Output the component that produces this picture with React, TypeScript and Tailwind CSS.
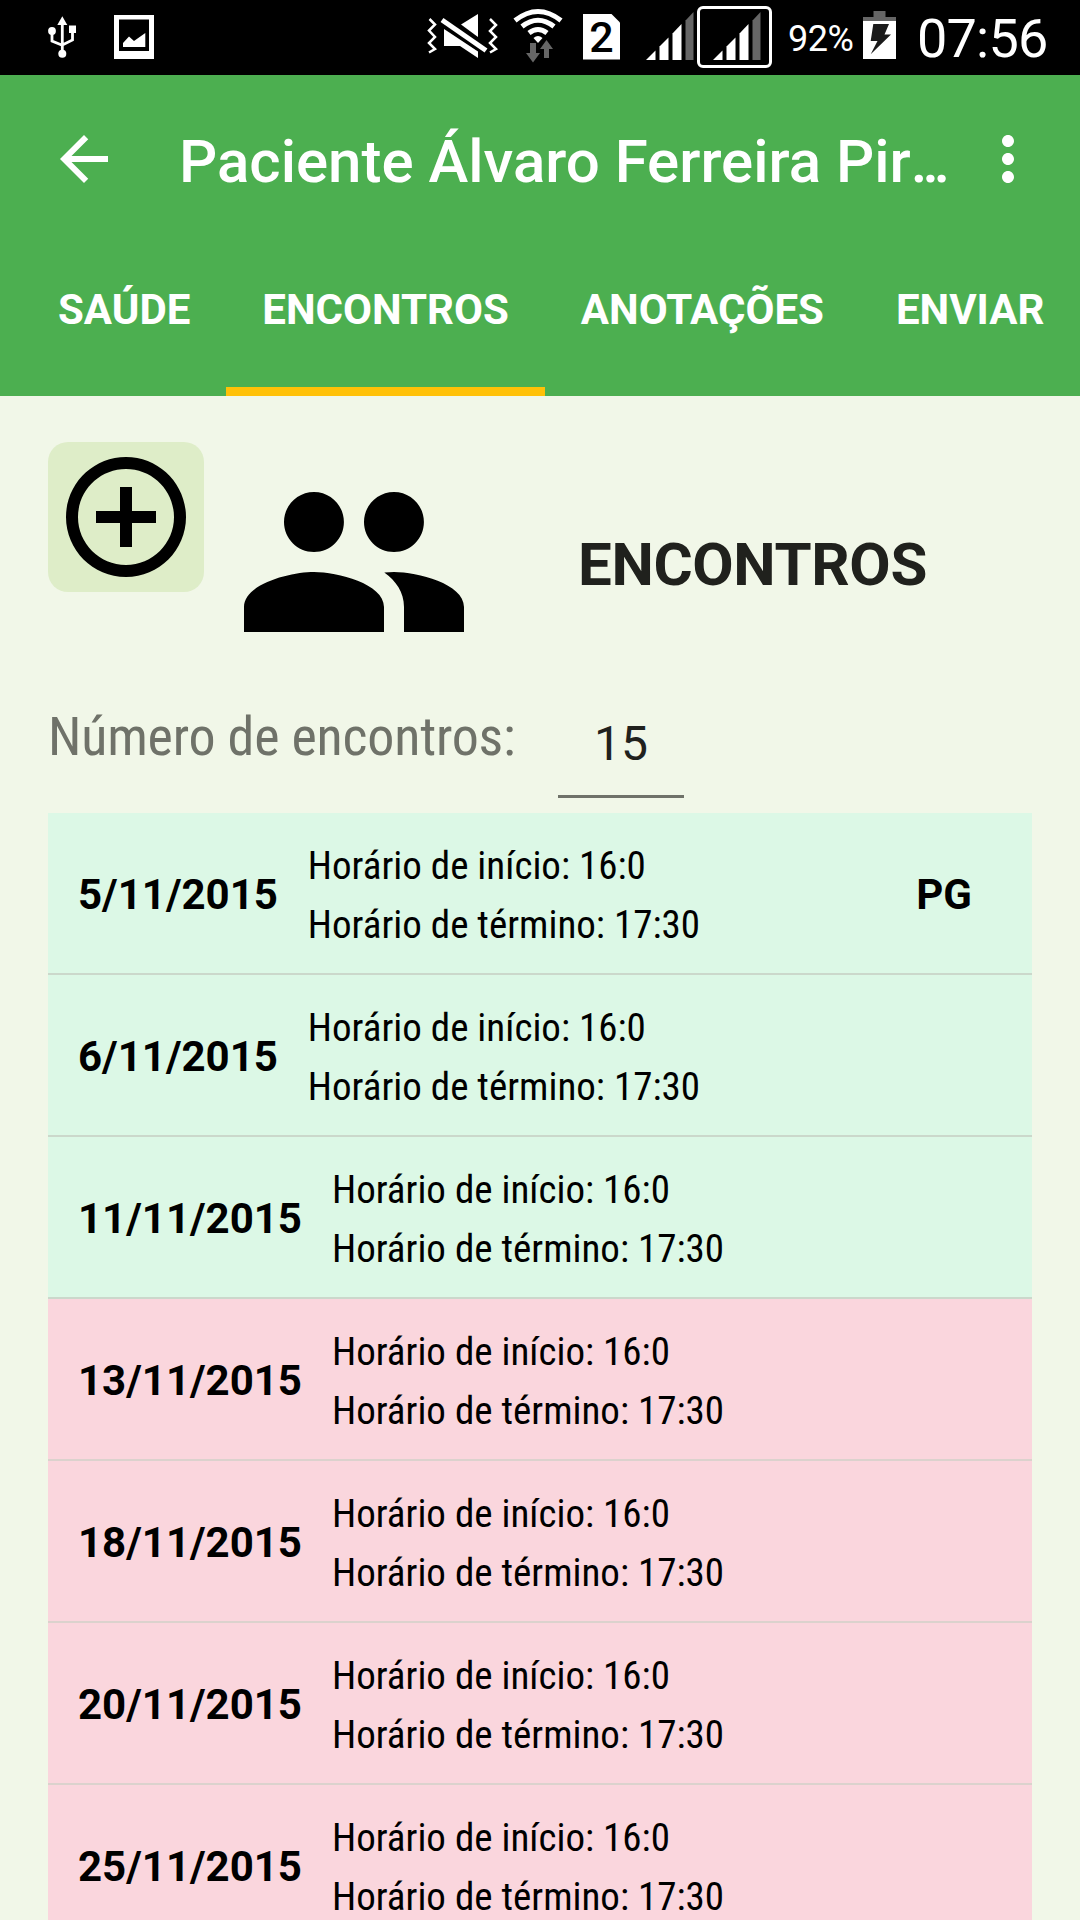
import React from 'react';
import { MdAddCircleOutline, MdArrowBack, MdMoreVert, MdPeople } from 'react-icons/md';

interface Encontro {
    data: string;
    inicio: string;
    termino: string;
    pago: boolean;
    realizado: boolean;
}

const encontros: Encontro[] = [
    { data: '5/11/2015', inicio: '16:0', termino: '17:30', pago: true, realizado: true },
    { data: '6/11/2015', inicio: '16:0', termino: '17:30', pago: false, realizado: true },
    { data: '11/11/2015', inicio: '16:0', termino: '17:30', pago: false, realizado: true },
    { data: '13/11/2015', inicio: '16:0', termino: '17:30', pago: false, realizado: false },
    { data: '18/11/2015', inicio: '16:0', termino: '17:30', pago: false, realizado: false },
    { data: '20/11/2015', inicio: '16:0', termino: '17:30', pago: false, realizado: false },
    { data: '25/11/2015', inicio: '16:0', termino: '17:30', pago: false, realizado: false },
];

const tabs = ['SAÚDE', 'ENCONTROS', 'ANOTAÇÕES', 'ENVIAR'];

const UsbIcon = () => (
    <svg width="32" height="75" viewBox="0 0 32 75" fill="#fff">
        <path d="M16.3 16.3l5 8.7h-10z" />
        <circle cx="6" cy="31" r="3.9" />
        <path d="M23 25.5h7V33h-7z" />
        <circle cx="16.3" cy="53.7" r="4" />
        <path d="M16.3 24v27M6 33v8l10.3 4.2M26.5 32v8l-10.2 5" fill="none" stroke="#fff" strokeWidth="2.8" />
    </svg>
);

const PictureIcon = () => (
    <svg width="40" height="75" viewBox="0 0 40 75" fill="#fff">
        <path fillRule="evenodd" d="M0 15h40v44H0zM5 19.5v31.5h30V19.5z" />
        <path d="M9 47v-4l6-6.5 5 4.5 11.3-8v14z" />
    </svg>
);

const MuteIcon = () => (
    <svg width="72" height="75" viewBox="0 0 72 75" fill="#fff">
        <path d="M2.5 19l5.5 5.500-6 6 6 6.500-6 6 6 6-6 3.500M63 19l6 6-6 6 6 6-6 6 6 6-6 3.500" fill="none" stroke="#fff" strokeWidth="2.5" />
        <path d="M51 14v23L34 24.5z" />
        <path d="M17 29l34 22.5V58L33 46H17z" />
        <path d="M15 20l44 30.5" stroke="#000" strokeWidth="10" />
        <path d="M15 20l44 30.5" stroke="#fff" strokeWidth="5" />
    </svg>
);

const WifiIcon = () => (
    <svg width="50" height="75" viewBox="0 0 50 75">
        <g fill="none" stroke="#fff" strokeWidth="5">
            <path d="M2 20.5Q25 2.5 48 20.5" />
            <path d="M9 26.5Q25 14 41 26.5" />
            <path d="M16 33Q25 26 34 33" />
        </g>
        <path d="M20.5 38q4.500-4 9 0l-4.500 5z" fill="#fff" />
        <path d="M17 43h6v10h4l-7 9.5-7-9.500h4zM31 58V49h-4l6.500-9 6.500 9h-4v9z" fill="#666" />
    </svg>
);

const SimIcon = () => (
    <div className="flex h-[46px] w-[37px] items-center justify-center bg-white pt-0.5 text-[43px] leading-none font-medium text-black [clip-path:polygon(0_0,28px_0,100%_9px,100%_100%,0_100%)]">
        2
    </div>
);

const SignalIcon = () => (
    <svg width="48" height="75" viewBox="0 0 48 75" fill="#fff">
        <path d="M0 60l9.5-9.500V60z" />
        <path d="M13.5 60V46.5l9-9V60z" />
        <path d="M26.5 60V33.5l9-9.500V60z" />
        <path d="M39.5 60V20.5l8-8.500V60z" fill="#666" />
    </svg>
);

const BatteryIcon = () => (
    <svg width="33" height="75" viewBox="0 0 33 75">
        <path d="M0 21v-4h10.5v-6h12v6H33v4z" fill="#666" />
        <path d="M0 21h33v38H0z" fill="#fff" />
        <path d="M10.3 24H26l-4.500 10.5H28L7.7 54.3 14.5 41H7.7z" fill="#1a1a1a" />
    </svg>
);

const StatusBar = () => (
    <div className="flex h-[75px] items-center bg-black text-white">
        <div className="flex flex-1 items-center gap-9 pl-[46px]">
            <UsbIcon />
            <PictureIcon />
        </div>
        <div className="flex items-center pr-[30px]">
            <MuteIcon />
            <div className="ml-3.5"><WifiIcon /></div>
            <div className="ml-5 pb-0.5"><SimIcon /></div>
            <div className="ml-[26px]"><SignalIcon /></div>
            <div className="mb-0.5 ml-[3px] flex h-[62px] w-[75px] items-center justify-center overflow-hidden rounded-md border-[3px] border-white pt-0.5 pl-[5px]">
                <SignalIcon />
            </div>
            <span className="ml-4 w-[67px] pt-0.5 text-[36px] leading-none tracking-[-0.5px]">92%</span>
            <div className="ml-2"><BatteryIcon /></div>
            <span className="ml-[21px] w-[133px] pt-0.5 text-[54px] leading-none tracking-[-0.8px]">07:56</span>
        </div>
    </div>
);

const Header = () => (
    <header className="bg-[#4caf50] text-white">
        <div className="flex h-[168px] items-center pr-9 pl-12">
            <button aria-label="Voltar">
                <MdArrowBack size={72} />
            </button>
            <h1 className="ml-[59px] flex-1 pt-1.5 text-[60px] leading-none font-medium whitespace-nowrap">
                Paciente Álvaro Ferreira Pir<span className="[font-stretch:80%]">…</span>
            </h1>
            <button aria-label="Mais opções">
                <MdMoreVert size={72} />
            </button>
        </div>
        <nav className="flex h-[153px] overflow-hidden pl-[22px]">
            {tabs.map((tab) => (
                <div
                    key={tab}
                    className={`flex shrink-0 items-center border-b-[9px] px-9 pb-[11px] text-[42px] leading-none font-bold ${
                        tab === 'ENCONTROS' ? 'border-[#ffc107]' : 'border-transparent'
                    }`}
                >
                    {tab}
                </div>
            ))}
        </nav>
    </header>
);

const EncontroRow: React.FC<{ encontro: Encontro }> = ({ encontro }) => (
    <li
        className={`flex h-[162px] items-center border-b-2 pt-[5px] pr-[60px] pl-[30px] text-black ${
            encontro.realizado ? 'border-[#cbd8cb] bg-[#dcf8e6]' : 'border-[#dbd2cd] bg-[#fad6dd]'
        }`}
    >
        <span className="pb-0.5 text-[42px] leading-none font-bold">{encontro.data}</span>
        <div className="ml-[30px] flex-1 text-[39px] leading-[59px] [font-stretch:75%]">
            <p>Horário de início: {encontro.inicio}</p>
            <p>Horário de término: {encontro.termino}</p>
        </div>
        {encontro.pago && <span className="pb-0.5 text-[42px] leading-none font-bold">PG</span>}
    </li>
);

export default function App() {
    return (
        <div className="flex h-[1920px] w-[1080px] flex-col overflow-hidden bg-[#f1f7e8] font-[Roboto,sans-serif]">
            <StatusBar />
            <Header />
            <main className="flex-1 overflow-hidden px-12 pt-[46px]">
                <div className="flex h-[240px] items-start">
                    <button className="flex h-[150px] w-[156px] items-center justify-center rounded-[20px] bg-[#deedc8] text-black" aria-label="Adicionar encontro">
                        <MdAddCircleOutline size={144} />
                    </button>
                    <MdPeople size={240} className="ml-[30px] text-black" />
                    <h2 className="ml-[104px] pt-[93px] text-[60px] leading-none font-bold tracking-[-0.35px] text-[#20211d]">ENCONTROS</h2>
                </div>
                <div className="flex h-[131px] items-start text-[#6f7269]">
                    <span className="w-[510px] pt-7 text-[54px] leading-none tracking-[-0.2px] [font-stretch:75%]">Número de encontros:</span>
                    <div className="h-[116px] w-[126px] border-b-[3px] border-[#6f7269] pt-[38px] text-center text-[48px] leading-none text-[#20211d]">
                        15
                    </div>
                </div>
                <ul>
                    {encontros.map((encontro) => (
                        <EncontroRow key={encontro.data} encontro={encontro} />
                    ))}
                </ul>
            </main>
        </div>
    );
}
